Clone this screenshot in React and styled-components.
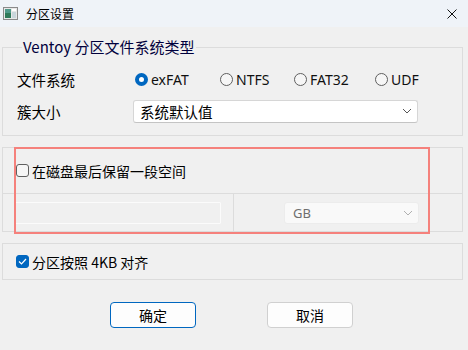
import React from 'react';
import styled, { createGlobalStyle } from 'styled-components';

const GlobalStyle = createGlobalStyle`
  html, body { margin: 0; padding: 0; background: #f0f0f0; }
  body { font-family: "Noto Sans CJK SC", "Noto Sans", sans-serif; color: #000; }
`;

const Window = styled.div`
  position: relative;
  width: 468px;
  height: 350px;
  background: #f0f0f0;
  display: flex;
  flex-direction: column;
  overflow: hidden;
`;

const TitleBar = styled.div`
  height: 27px;
  flex: none;
  background: #eff3f8;
  display: flex;
  align-items: center;
  padding: 0 11px 0 3px;
`;

const Title = styled.span`
  margin-left: 8px;
  font-size: 12px;
  flex: 1;
`;

const Body = styled.div`
  display: flex;
  flex-direction: column;
  padding: 0 5px 0 2px;
`;

const GroupBox = styled.fieldset`
  margin: 11px 0 0;
  padding: 7px 0 8px 14px;
  border: 1px solid #dcdcdc;
  min-width: 0;
`;

const Legend = styled.legend`
  margin-left: 5px;
  padding: 0 2px 0 1px;
  font-size: 15px;
  line-height: 18px;
  color: #00003c;
`;

const Row = styled.div`
  display: flex;
  align-items: center;
  height: 32px;
`;

const Label = styled.span`
  width: 116px;
  flex: none;
  font-size: 14.5px;
`;

const RadioOption = styled.label`
  display: flex;
  align-items: center;
  width: ${p => p.$w ? `${p.$w}px` : 'auto'};
  font-family: "Noto Sans", "Noto Sans CJK SC", sans-serif;
  font-size: 14px;
  gap: 3px;
  color: #101010;
`;

const RadioDot = styled.span`
  box-sizing: border-box;
  width: 13px;
  height: 13px;
  border-radius: 50%;
  flex: none;
  background: ${p => p.$on ? '#fff' : '#f6f6f6'};
  border: ${p => p.$on ? '4px solid #0067c0' : '1px solid #5f5f5f'};
`;

const RadioWrap = styled.div`
  display: flex;
  align-items: center;
  padding-left: 2px;
`;

const Select = styled.div`
  box-sizing: border-box;
  width: ${p => p.$w}px;
  height: ${p => p.$h || 23}px;
  display: flex;
  align-items: center;
  justify-content: space-between;
  padding: 0 5px 0 ${p => p.$pl || 6}px;
  background: ${p => p.$disabled ? '#f9f9f9' : '#fff'};
  border: 1px solid ${p => p.$disabled ? '#ececec' : '#d6d6d6'};
  border-bottom-color: ${p => p.$disabled ? '#ececec' : '#c4c4c4'};
  border-radius: 3px;
  font-size: ${p => p.$disabled ? 13 : 14.5}px;
  color: ${p => p.$disabled ? '#6e6e6e' : '#000'};
  font-family: ${p => p.$disabled ? '"Noto Sans", sans-serif' : '"Noto Sans CJK SC", sans-serif'};
`;

const Panel = styled.div`
  margin-top: 11px;
  border: 1px solid #dcdcdc;
  display: flex;
  flex-direction: column;
`;

const PanelRow = styled.div`
  display: flex;
  align-items: center;
  height: ${p => p.$h}px;
  padding-left: ${p => p.$pl || 0}px;
  border-top: ${p => p.$divided ? '1px solid #dcdcdc' : 'none'};
`;

const Cell = styled.div`
  display: flex;
  align-items: center;
  height: 100%;
  width: ${p => p.$w ? `${p.$w}px` : 'auto'};
  flex: ${p => p.$w ? 'none' : 1};
  padding-left: ${p => p.$pl}px;
  border-right: ${p => p.$divided ? '1px solid #dcdcdc' : 'none'};
  box-sizing: border-box;
`;

const TextBox = styled.div`
  box-sizing: border-box;
  width: 206px;
  height: 22px;
  border: 1px solid #fbfbfb;
  border-radius: 1px;
`;

const CheckLabel = styled.label`
  display: flex;
  align-items: center;
  gap: 3px;
  font-size: 14px;
`;

const Box = styled.span`
  box-sizing: border-box;
  width: 13px;
  height: 13px;
  flex: none;
  border-radius: 3px;
  display: flex;
  align-items: center;
  justify-content: center;
  background: ${p => p.$on ? '#0067c0' : '#f6f6f6'};
  border: 1px solid ${p => p.$on ? '#0067c0' : '#5f5f5f'};
`;

const Buttons = styled.div`
  display: flex;
  margin-top: 22px;
  padding-left: 108px;
  gap: 71px;
`;

const Button = styled.button`
  box-sizing: border-box;
  width: 86px;
  height: 26px;
  border-radius: 4px;
  background: #fdfdfd;
  border: 1px solid ${p => p.$primary ? '#0067c0' : '#d0d0d0'};
  font-family: "Noto Sans CJK SC", sans-serif;
  font-size: 14px;
  color: #000;
  padding: 0;
`;

const Highlight = styled.div`
  position: absolute;
  left: 14px;
  top: 147px;
  width: 416px;
  height: 87px;
  box-sizing: border-box;
  border: 2px solid #f5817c;
  pointer-events: none;
`;

const Chevron = ({ color = '#555' }) => (
  <svg width="10" height="6" viewBox="0 0 10 6">
    <polyline points="1,1 5,5 9,1" fill="none" stroke={color} strokeWidth="1" />
  </svg>
);

const AppIcon = () => (
  <svg width="15" height="13" viewBox="0 0 15 13">
    <rect x="0.5" y="0.5" width="14" height="12" fill="#e8e8e8" stroke="#8a8a8a" />
    <rect x="2" y="2" width="6" height="9" fill="#2f7a5a" />
    <rect x="2" y="2" width="6" height="4" fill="#4f9a8a" />
    <rect x="9" y="2" width="4" height="2" fill="#fff" />
    <rect x="9" y="5" width="4" height="6" fill="#c9d6dc" />
  </svg>
);

const CloseIcon = () => (
  <svg width="10" height="10" viewBox="0 0 10 10">
    <path d="M0.5 0.5 L9.5 9.5 M9.5 0.5 L0.5 9.5" stroke="#111" strokeWidth="1" />
  </svg>
);

const Check = () => (
  <svg width="9" height="7" viewBox="0 0 9 7">
    <polyline points="1,3.5 3.5,6 8,1" fill="none" stroke="#fff" strokeWidth="1.2" />
  </svg>
);

const radios = [
  { name: 'exFAT', w: 85, on: true },
  { name: 'NTFS', w: 74 },
  { name: 'FAT32', w: 81 },
  { name: 'UDF' },
];

export default function App() {
  return (
    <Window>
      <GlobalStyle />
      <TitleBar>
        <AppIcon />
        <Title>分区设置</Title>
        <CloseIcon />
      </TitleBar>
      <Body>
        <GroupBox>
          <Legend>Ventoy 分区文件系统类型</Legend>
          <Row>
            <Label>文件系统</Label>
            <RadioWrap>
              {radios.map(r => (
                <RadioOption key={r.name} $w={r.w}>
                  <RadioDot $on={r.on} />
                  {r.name}
                </RadioOption>
              ))}
            </RadioWrap>
          </Row>
          <Row>
            <Label>簇大小</Label>
            <Select $w={285}>
              系统默认值
              <Chevron />
            </Select>
          </Row>
        </GroupBox>

        <Panel>
          <PanelRow $h={45} $pl={13}>
            <CheckLabel>
              <Box />
              在磁盘最后保留一段空间
            </CheckLabel>
          </PanelRow>
          <PanelRow $h={37} $divided>
            <Cell $w={231} $pl={12} $divided>
              <TextBox />
            </Cell>
            <Cell $pl={50}>
              <Select $w={135} $h={22} $pl={8} $disabled>
                GB
                <Chevron color="#b0b0b0" />
              </Select>
            </Cell>
          </PanelRow>
        </Panel>

        <Panel>
          <PanelRow $h={35} $pl={13}>
            <CheckLabel>
              <Box $on><Check /></Box>
              分区按照 4KB 对齐
            </CheckLabel>
          </PanelRow>
        </Panel>

        <Buttons>
          <Button $primary>确定</Button>
          <Button>取消</Button>
        </Buttons>
      </Body>
      <Highlight />
    </Window>
  );
}
